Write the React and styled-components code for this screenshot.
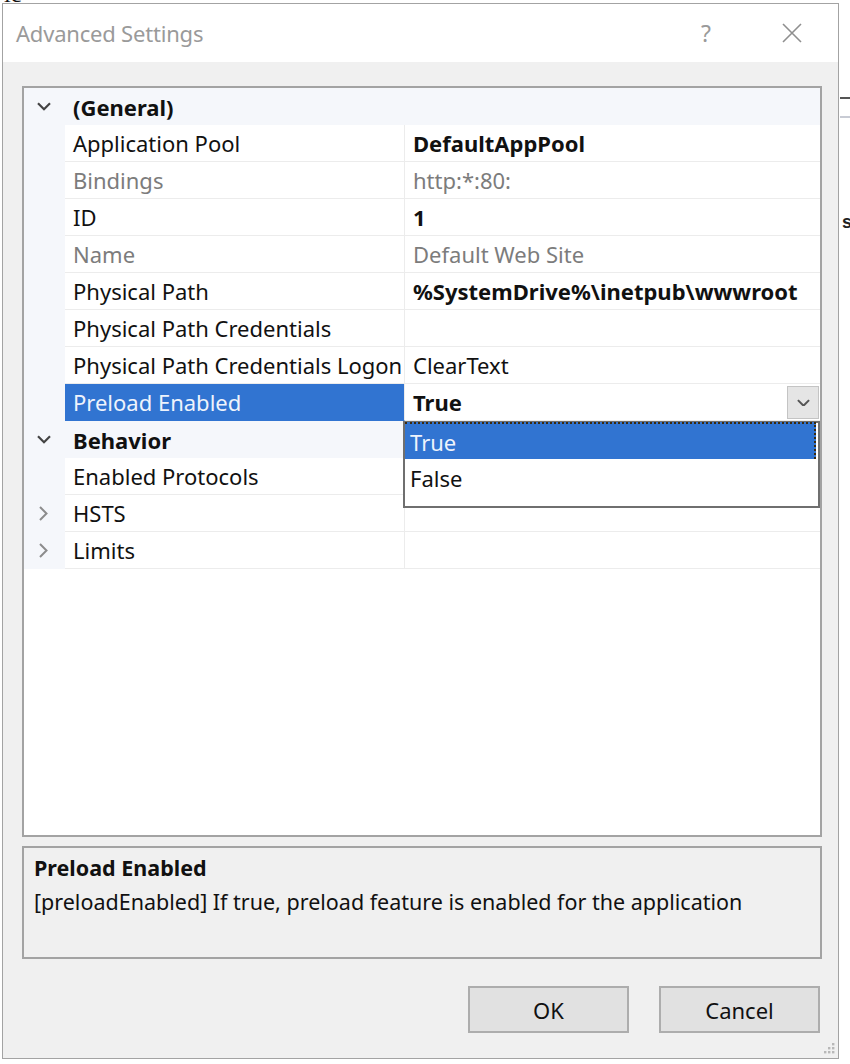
import React from 'react';
import styled, { createGlobalStyle } from 'styled-components';

// Paleta do diálogo (tons do Windows)
const colors = {
  border: '#a3a3a3',
  panel: '#f0f0f0',
  gutter: '#f5f7fb',
  line: '#ececec',
  select: '#3174d1',
  text: '#111',
  muted: '#7c7c7c',
};

const GlobalStyle = createGlobalStyle`
  html, body { margin: 0; padding: 0; background: #fff; }
  body { font-family: 'Noto Sans', 'Open Sans', 'Liberation Sans', sans-serif; }
  * { box-sizing: border-box; }
`;

const Page = styled.div`
  position: relative;
  width: 850px;
  height: 1064px;
  overflow: hidden;
  padding: 3px 0 0 2px;
`;

/* restos da janela que fica atrás */
const BehindText = styled.span`
  position: absolute;
  top: -19px;
  left: 4px;
  font: 24px 'Liberation Serif', serif;
  color: #111;
`;

const BehindMark = styled.div`
  position: absolute;
  left: 840px;
  top: ${(p) => p.$top}px;
  width: 10px;
  height: 2px;
  background: ${(p) => p.$color};
`;

const BehindLetter = styled.span`
  position: absolute;
  left: 842px;
  top: 212px;
  font: bold 18px 'Liberation Sans', sans-serif;
  color: #222;
`;

const Dialog = styled.div`
  width: 837px;
  height: 1056px;
  border: 1px solid ${colors.border};
  display: flex;
  flex-direction: column;
  position: relative;
  background: ${colors.panel};
`;

const TitleBar = styled.div`
  height: 58px;
  background: #fff;
  display: flex;
  align-items: center;
  padding: 0 26px 0 13px;
`;

const Title = styled.div`
  flex: 1;
  font-size: 22px;
  color: #9a9a9a;
  letter-spacing: -0.2px;
`;

const TitleButton = styled.div`
  width: 40px;
  display: flex;
  justify-content: center;
  align-items: center;
  color: #9a9a9a;
  font-size: 23px;
  margin-left: ${(p) => p.$gap || 0}px;
`;

const Body = styled.div`
  flex: 1;
  display: flex;
  flex-direction: column;
  padding: 24px 16px 0 19px;
`;

const Grid = styled.div`
  height: 751px;
  border: 2px solid ${colors.border};
  background: #fff;
  display: flex;
  flex-direction: column;
`;

const Row = styled.div`
  display: grid;
  grid-template-columns: 41px 340px 1fr;
  height: 37px;
  font-size: 22px;
  background: ${(p) => (p.$category ? colors.gutter : '#fff')};
`;

const Gutter = styled.div`
  background: ${colors.gutter};
  display: flex;
  align-items: center;
  justify-content: center;
  padding-right: 2px;
`;

const NameCell = styled.div`
  display: flex;
  align-items: center;
  padding-left: 8px;
  border-bottom: 1px solid ${(p) => (p.$selected ? colors.select : colors.line)};
  border-right: 1px solid ${colors.line};
  background: ${(p) => (p.$selected ? colors.select : 'transparent')};
  color: ${(p) => (p.$selected ? '#eef3fc' : p.$muted ? colors.muted : colors.text)};
  white-space: nowrap;
  overflow: hidden;
`;

const CategoryName = styled.div`
  grid-column: 2 / 4;
  display: flex;
  align-items: center;
  padding-left: 8px;
  font-weight: 700;
  color: ${colors.text};
`;

const ValueCell = styled.div`
  position: relative;
  display: flex;
  align-items: center;
  padding-left: 8px;
  border-bottom: 1px solid ${colors.line};
  color: ${(p) => (p.$muted ? colors.muted : colors.text)};
  font-weight: ${(p) => (p.$bold ? 700 : 400)};
  white-space: nowrap;
`;

const DropButton = styled.div`
  position: absolute;
  right: 1px;
  top: 2px;
  width: 32px;
  height: 33px;
  background: #e5e5e5;
  border: 1px solid #c4c4c4;
  display: flex;
  align-items: center;
  justify-content: center;
`;

const DropList = styled.div`
  position: absolute;
  left: -2px;
  top: calc(100% + 1px);
  width: 417px;
  height: 87px;
  background: #fff;
  border: 2px solid #6f6f6f;
  padding-top: 1px;
  z-index: 2;
`;

const DropItem = styled.div`
  height: 37px;
  display: flex;
  align-items: center;
  padding-left: 5px;
  margin-right: 2px;
  font-weight: 400;
  background: ${(p) => (p.$active ? colors.select : 'transparent')};
  color: ${(p) => (p.$active ? '#eef3fc' : colors.text)};
  border-top: ${(p) => (p.$active ? '2px dotted #3a2a10' : 'none')};
  border-right: ${(p) => (p.$active ? '2px dotted #3a2a10' : 'none')};
  margin-top: ${(p) => (p.$active ? '-2px' : '0')};
`;

const Description = styled.div`
  margin-top: 9px;
  height: 113px;
  border: 2px solid ${colors.border};
  background: ${colors.panel};
  padding: 5px 10px;
  font-size: 21.5px;
  color: ${colors.text};
`;

const DescTitle = styled.div`
  font-weight: 700;
  line-height: 30px;
`;

const DescText = styled.div`
  margin-top: 4px;
  line-height: 30px;
`;

const Buttons = styled.div`
  display: flex;
  justify-content: flex-end;
  gap: 30px;
  margin-top: 27px;
  margin-right: 2px;
`;

const Button = styled.div`
  width: 161px;
  height: 47px;
  background: #e1e1e1;
  border: 2px solid #adadad;
  display: flex;
  align-items: center;
  justify-content: center;
  font-size: 22px;
  color: ${colors.text};
`;

const Grip = styled.svg`
  position: absolute;
  right: 3px;
  bottom: 3px;
`;

const ChevronDown = ({ color = '#444', size = 14 }) => (
  <svg width={size} height={size * 0.6} viewBox="0 0 14 8">
    <polyline points="1,1 7,7 13,1" fill="none" stroke={color} strokeWidth="2.2" />
  </svg>
);

const ChevronRight = () => (
  <svg width="9" height="15" viewBox="0 0 9 15">
    <polyline points="1,1 7.5,7.5 1,14" fill="none" stroke="#8c8c8c" strokeWidth="2" />
  </svg>
);

const general = [
  { name: 'Application Pool', value: 'DefaultAppPool', bold: true },
  { name: 'Bindings', value: 'http:*:80:', muted: true },
  { name: 'ID', value: '1', bold: true },
  { name: 'Name', value: 'Default Web Site', muted: true },
  { name: 'Physical Path', value: '%SystemDrive%\\inetpub\\wwwroot', bold: true },
  { name: 'Physical Path Credentials', value: '' },
  { name: 'Physical Path Credentials Logon', value: 'ClearText' },
];

function Category({ name, open }) {
  return (
    <Row $category>
      <Gutter>{open ? <ChevronDown /> : <ChevronRight />}</Gutter>
      <CategoryName>{name}</CategoryName>
    </Row>
  );
}

function Collapsed({ name }) {
  return (
    <Row>
      <Gutter><ChevronRight /></Gutter>
      <NameCell>{name}</NameCell>
      <ValueCell />
    </Row>
  );
}

function Property({ name, value, bold, muted }) {
  return (
    <Row>
      <Gutter />
      <NameCell $muted={muted}>{name}</NameCell>
      <ValueCell $bold={bold} $muted={muted}>{value}</ValueCell>
    </Row>
  );
}

export default function App() {
  return (
    <>
      <GlobalStyle />
      <Page>
        <BehindText>ic</BehindText>
        <BehindMark $top={97} $color="#555" />
        <BehindMark $top={116} $color="#c8cbd4" />
        <BehindLetter>s</BehindLetter>
        <Dialog>
          <TitleBar>
            <Title>Advanced Settings</Title>
            <TitleButton>?</TitleButton>
            <TitleButton $gap={46}>
              <svg width="20" height="20" viewBox="0 0 20 20">
                <path d="M1 1 L19 19 M19 1 L1 19" stroke="#8f8f8f" strokeWidth="1.6" />
              </svg>
            </TitleButton>
          </TitleBar>
          <Body>
            <Grid>
              <Category name="(General)" open />
              {general.map((p) => (
                <Property key={p.name} {...p} />
              ))}
              <Row>
                <Gutter />
                <NameCell $selected>Preload Enabled</NameCell>
                <ValueCell $bold>
                  True
                  <DropButton><ChevronDown color="#555" size={13} /></DropButton>
                  <DropList>
                    <DropItem $active>True</DropItem>
                    <DropItem>False</DropItem>
                  </DropList>
                </ValueCell>
              </Row>
              <Category name="Behavior" open />
              <Property name="Enabled Protocols" value="" />
              <Collapsed name="HSTS" />
              <Collapsed name="Limits" />
            </Grid>
            <Description>
              <DescTitle>Preload Enabled</DescTitle>
              <DescText>[preloadEnabled] If true, preload feature is enabled for the application</DescText>
            </Description>
            <Buttons>
              <Button>OK</Button>
              <Button>Cancel</Button>
            </Buttons>
          </Body>
          <Grip width="14" height="14" viewBox="0 0 14 14">
            {[[11, 2], [7, 6], [11, 6], [3, 10], [7, 10], [11, 10]].map(([x, y]) => (
              <rect key={`${x}-${y}`} x={x} y={y} width="2.4" height="2.4" fill="#b8b8b8" />
            ))}
          </Grip>
        </Dialog>
      </Page>
    </>
  );
}
